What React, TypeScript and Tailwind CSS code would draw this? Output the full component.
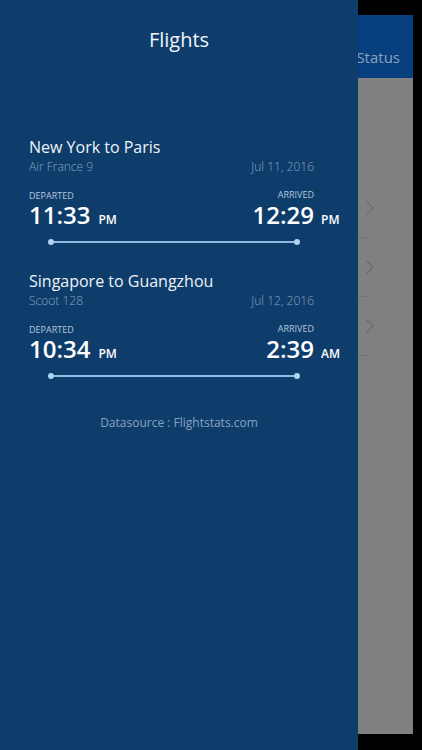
import { ChevronRight } from 'lucide-react'

type Flight = {
  route: string
  flight: string
  date: string
  dep: string
  depSuffix: string
  arr: string
  arrSuffix: string
}

const flights: Flight[] = [
  { route: 'New York to Paris', flight: 'Air France 9', date: 'Jul 11, 2016', dep: '11:33', depSuffix: 'PM', arr: '12:29', arrSuffix: 'PM' },
  { route: 'Singapore to Guangzhou', flight: 'Scoot 128', date: 'Jul 12, 2016', dep: '10:34', depSuffix: 'PM', arr: '2:39', arrSuffix: 'AM' },
]

function FlightCard({ f }: { f: Flight }) {
  return (
    <div className="pl-[29px] pr-[44px]">
      <div className="text-[16px] leading-[22px] text-[#eef3f8]">{f.route}</div>
      <div className="flex justify-between text-[12px] leading-[18px] text-[#86a2c2] font-light">
        <span>{f.flight}</span>
        <span>{f.date}</span>
      </div>

      <div className="mt-[14px] flex justify-between text-[9px] leading-[12px] text-[#b3c8df]">
        <span>DEPARTED</span>
        <span className="-mt-[1px]">ARRIVED</span>
      </div>

      <div className="mt-[1px] flex h-[24px] items-baseline justify-between text-white">
        <div className="flex items-baseline">
          <span className="text-[24px] leading-[24px] font-semibold">{f.dep}</span>
          <span className="ml-[8px] text-[12px] leading-[12px] font-semibold">{f.depSuffix}</span>
        </div>
        <div className="-mr-[25px] flex items-baseline">
          <span className="text-[24px] leading-[24px] font-semibold">{f.arr}</span>
          <span className="w-[25px] pl-[7px] text-[12px] leading-[12px] font-semibold">{f.arrSuffix}</span>
        </div>
      </div>

      {/* timeline */}
      <div className="ml-[19px] mr-[14px] mt-[12px] flex h-[6px] items-center">
        <span className="h-[6px] w-[6px] rounded-full bg-[#b0d3f3]" />
        <span className="h-[1.5px] flex-1 bg-[#8fbbe4]" />
        <span className="h-[6px] w-[6px] rounded-full bg-[#b0d3f3]" />
      </div>
    </div>
  )
}

export default function App() {
  return (
    <div
      className="flex h-[750px] w-[422px] overflow-hidden bg-black"
      style={{ fontFamily: '"Open Sans", "Noto Sans", sans-serif' }}
    >
      {/* Drawer */}
      <div className="relative z-10 flex w-[358px] shrink-0 flex-col bg-[#0f3d6b]">
        <div className="pt-[26px] text-center text-[20px] leading-[28px] text-[#f2f6fa]">Flights</div>

        <div className="mt-[82px] flex flex-col gap-[25px]">
          {flights.map((f) => (
            <FlightCard key={f.route} f={f} />
          ))}
        </div>

        <div className="mt-[35px] text-center text-[12px] leading-[18px] text-[#86a3c4]">
          Datasource : Flightstats.com
        </div>
      </div>

      {/* Underlying screen (dimmed) */}
      <div className="flex w-[55px] shrink-0 flex-col pt-[15px] pb-[16px]">
        <div className="flex h-[63px] items-end justify-end overflow-hidden bg-[#073f7e] pb-[11px] pr-[13px]">
          <span className="whitespace-nowrap text-[15px] leading-[20px] text-[#8aa2bf]">Status</span>
        </div>
        <div className="flex flex-1 flex-col bg-[#808080] pt-[101px]">
          {[0, 1, 2].map((i) => (
            <div key={i} className="flex h-[59px] flex-col">
              <div className="flex flex-1 items-center">
                <ChevronRight className="h-[24px] w-[24px] text-[#6a6a6a]" strokeWidth={1.2} />
              </div>
              <div className="h-px w-[12px] bg-[#737373]" />
            </div>
          ))}
        </div>
      </div>
    </div>
  )
}
